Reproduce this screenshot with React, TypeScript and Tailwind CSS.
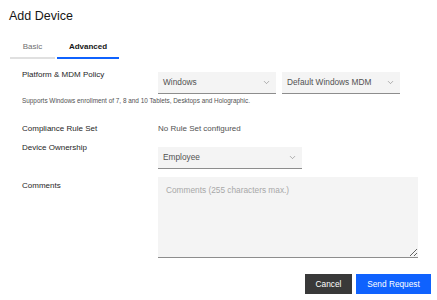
import { ChevronDown } from "lucide-react";

const font = { fontFamily: '"Liberation Sans", Arial, sans-serif' };

const Select = ({ value, width }: { value: string; width: string }) => (
  <div
    className={`${width} h-[22px] bg-[#f4f4f4] border-b border-[#8d8d8d] flex items-center justify-between pl-[5px] pr-[5px] text-[8.3px] text-[#525252]`}
  >
    <span>{value}</span>
    <ChevronDown size={9} strokeWidth={1.4} className="text-[#6f6f6f]" />
  </div>
);

const App = () => {
  return (
    <div className="w-[437px] h-[300px] bg-white overflow-hidden text-[#262626]" style={font}>
      <div className="pl-[9px] pt-[9px]">
        <h1 className="text-[12.5px] leading-[15px] font-normal text-[#161616]">Add Device</h1>
        <div className="flex gap-[2px] mt-[13px] ml-[1px] text-[8px]">
          <div className="w-[45px] h-[22px] flex items-center justify-center border-b-2 border-[#e0e0e0] text-[#6f6f6f]">
            Basic
          </div>
          <div className="w-[62px] h-[22px] flex items-center justify-center border-b-2 border-[#0f62fe] font-bold text-[#161616]">
            Advanced
          </div>
        </div>
      </div>

      <div className="pl-[22px]">
        <div className="flex mt-[11px] items-start">
          <div className="w-[136px] text-[8px] leading-[10px]">Platform &amp; MDM Policy</div>
          <div className="flex gap-[6px] mt-[2px]">
            <Select value="Windows" width="w-[118px]" />
            <Select value="Default Windows MDM" width="w-[118px]" />
          </div>
        </div>
        <p className="mt-[3px] text-[6.4px] leading-[8px] text-[#525252]">
          Supports Windows enrollment of 7, 8 and 10 Tablets, Desktops and Holographic.
        </p>

        <div className="flex mt-[19px] text-[8px] leading-[10px]">
          <div className="w-[136px]">Compliance Rule Set</div>
          <div className="text-[#525252]">No Rule Set configured</div>
        </div>

        <div className="flex mt-[9px] items-start">
          <div className="w-[136px] text-[8px] leading-[10px]">Device Ownership</div>
          <div className="mt-[4px]">
            <Select value="Employee" width="w-[144px]" />
          </div>
        </div>

        <div className="flex mt-[8px] items-start">
          <div className="w-[136px] mt-[4px] text-[8px] leading-[10px]">Comments</div>
          <textarea
            className="w-[260px] h-[81px] bg-[#f4f4f4] border-b border-[#8d8d8d] pl-[8px] pt-[8px] text-[8.3px] leading-[10px] outline-none placeholder:text-[#a8a8a8]"
            style={font}
            placeholder="Comments (255 characters max.)"
          />
        </div>
      </div>

      <div className="flex justify-end gap-[4px] pr-[6px] mt-[16px] text-[8.3px]">
        <button className="w-[47px] h-[20px] bg-[#393939] text-white">Cancel</button>
        <button className="w-[75px] h-[20px] bg-[#0f62fe] text-white">Send Request</button>
      </div>
    </div>
  );
};

export default App;
